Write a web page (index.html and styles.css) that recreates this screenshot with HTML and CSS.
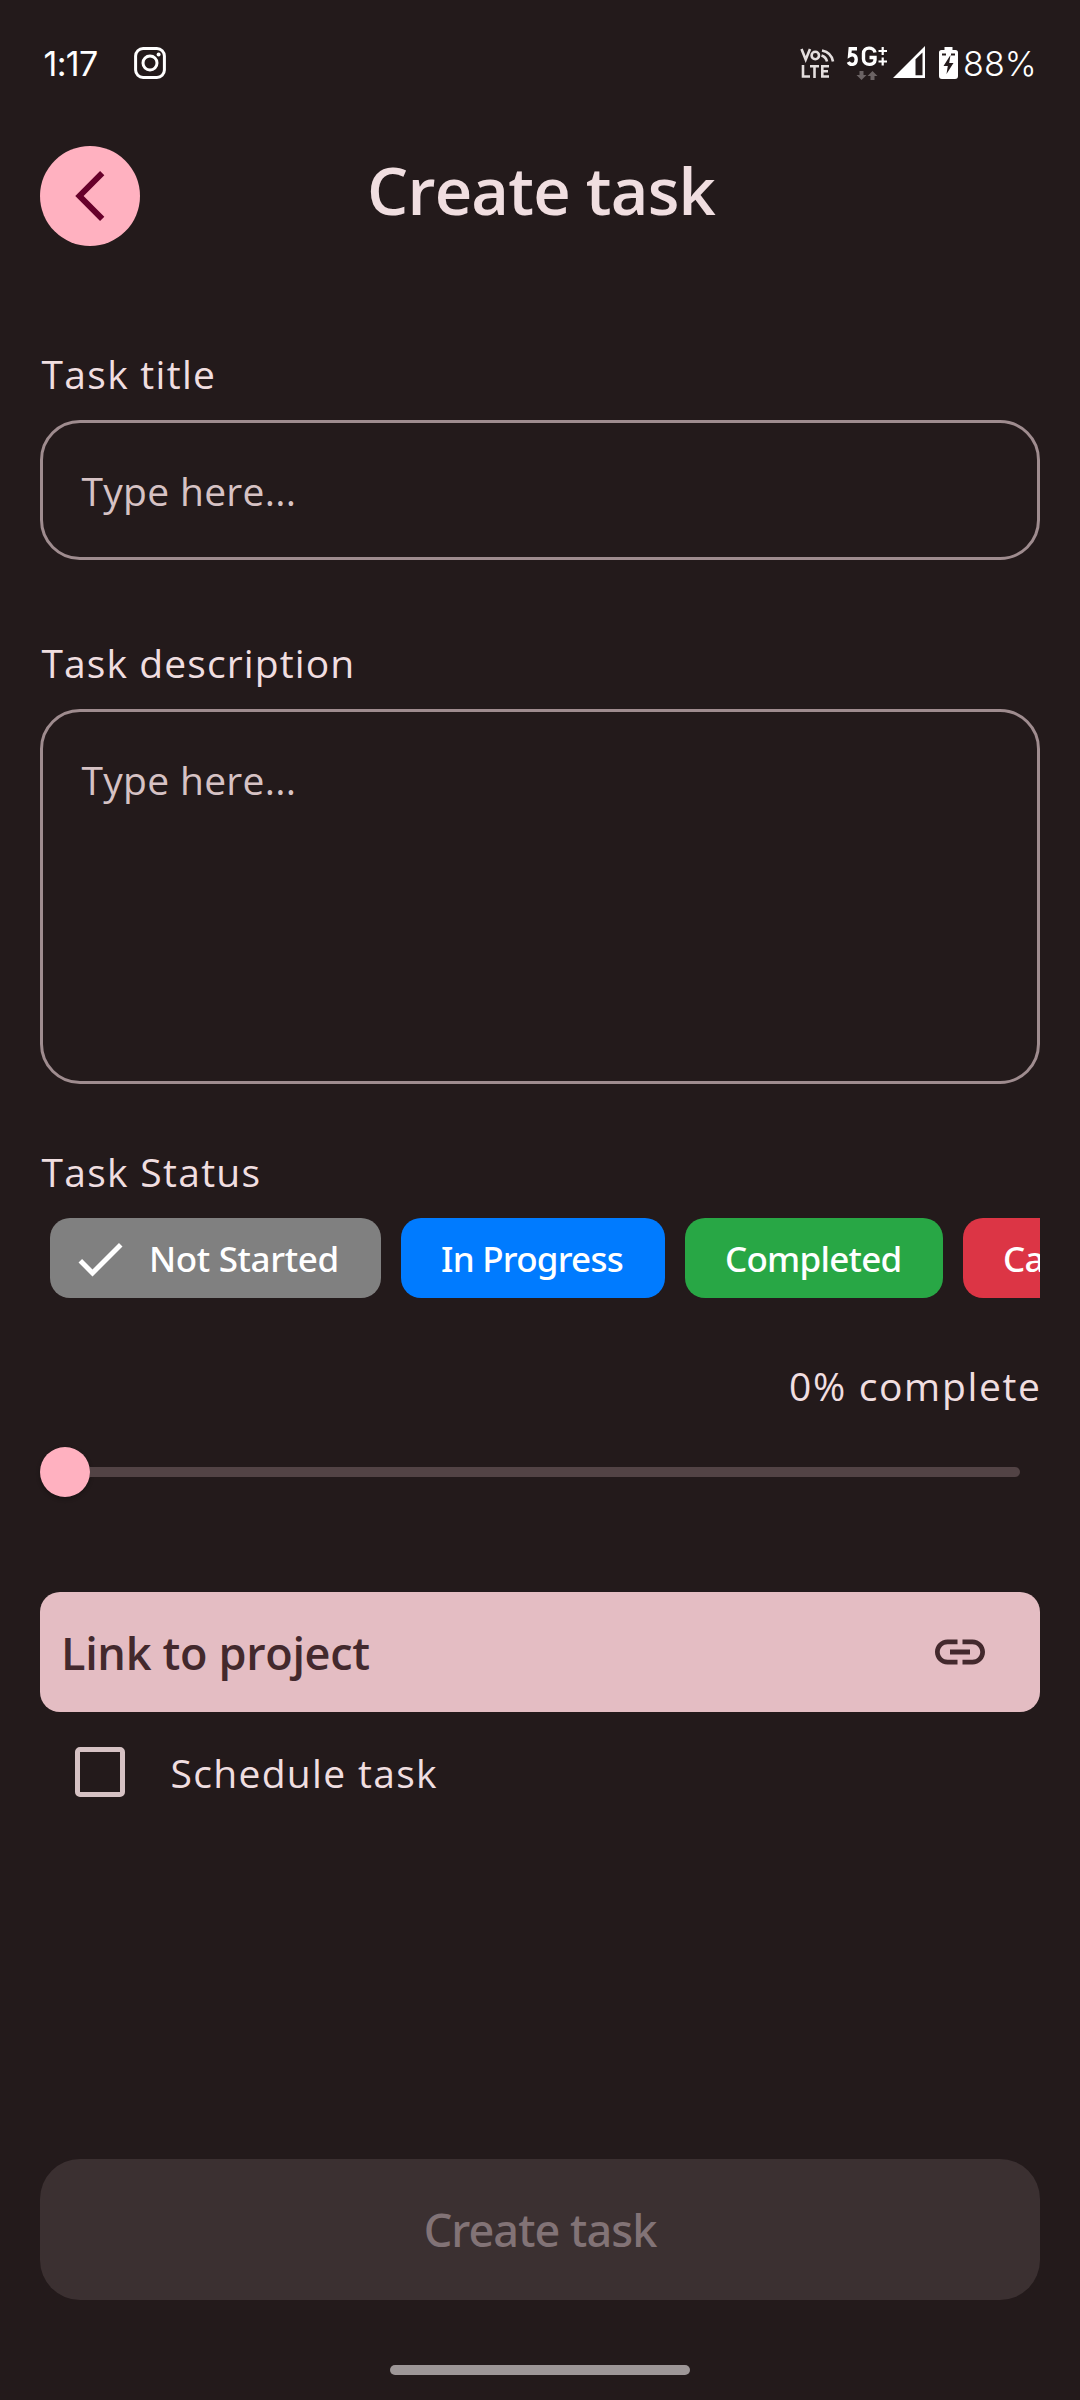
FILE: index.html
```html
<!DOCTYPE html>
<html lang="en">
<head>
<meta charset="utf-8">
<title>Create task</title>
<link rel="stylesheet" href="styles.css">
</head>
<body>
<div class="status-bar">
  <span class="clock">1:17</span>
  <svg class="insta" width="32" height="32" viewBox="0 0 32 32" fill="none" stroke="#fff">
    <rect x="1.6" y="1.6" width="28.8" height="28.8" rx="7.5" stroke-width="3"/>
    <circle cx="16" cy="16" r="7" stroke-width="3"/>
    <circle cx="24.6" cy="7.6" r="2" fill="#fff" stroke="none"/>
  </svg>
  <svg class="signals" width="160" height="40" viewBox="800 44 160 40">
    <g fill="none" stroke="#e4dede" stroke-width="2.6">
      <path d="M801.5 49L805.7 59.5L810 49"/>
      <circle cx="815.3" cy="55.5" r="3.7"/>
      <path d="M821.5 55.5Q826 57 827 61.5M822 50.5Q831.5 52.5 833 61.5"/>
      <path d="M803 65V76.5H810M810 66.3H819M814.5 66.3V78M829 66.3H822.3V76.5H829M822.3 71.3H828"/>
    </g>
    <g fill="none" stroke="#fff" stroke-width="3.4">
      <path d="M857 48.7H850.2L849.6 55.5C852 54 856.2 54.5 856.2 59.5C856.2 65.5 850 65.5 848.3 62"/>
      <path d="M875 52.5C874 46.5 863.5 46.5 863.5 53.5V59C863.5 66 875 66 875 60V57.5H869.5"/>
      <path d="M878.5 51H887M882.7 47V55M878.5 61.5H887M882.7 57.5V65.5" stroke-width="2.2"/>
    </g>
    <path d="M859.5 71h4v4h3l-5 5l-5-5h3zM870.500 80h4v-4h3l-5-5l-5 5h3z" fill="#6b6364"/>
    <path fill="#fff" fill-rule="evenodd" d="M893 78L925 46V78zM915.5 59.3V75.3H922.5V52.5z"/>
    <path fill="#fff" fill-rule="evenodd" d="M944.5 47h8v3h3q2.5 0 2.5 2.5v23.5q0 3-3 3h-13q-3 0-3-3v-23.5q0-2.5 2.5-2.5h3zM950.5 55l-7 11h4.3l-1.3 8l7-11h-4.300z"/>
    <path d="M942 54.5h4M951 54.5h4" stroke="#231a1b" stroke-width="2"/>
  </svg>
  <span class="battery">88%</span>
</div>

<header class="header">
  <div class="back">
    <svg width="100" height="100" viewBox="0 0 100 100" fill="none" stroke="#67002a" stroke-width="6"><path d="M62.2 27.2L39.5 50L62.2 72.8"/></svg>
  </div>
  <h1 class="title">Create task</h1>
</header>

<main class="form">
  <label class="label task-title">Task title</label>
  <div class="field">Type here...</div>
  <label class="label task-desc">Task description</label>
  <div class="field area">Type here...</div>
  <div class="label task-status">Task Status</div>
  <div class="chips">
    <div class="chip selected">
      <svg width="60" height="60" viewBox="0 0 24 24" fill="#fff"><path d="M9 16.17L4.83 12l-1.42 1.41L9 19 21 7l-1.41-1.41z"/></svg>
      <span class="not-started">Not Started</span>
    </div>
    <div class="chip progress">In Progress</div>
    <div class="chip done">Completed</div>
    <div class="chip cancelled">Cancelled</div>
  </div>
  <div class="label percent">0% complete</div>
  <div class="slider"><div class="thumb"></div><div class="track"></div></div>
  <div class="link">
    <span>Link to project</span>
    <svg width="60" height="60" viewBox="0 0 24 24" fill="#43292d"><path d="M3.9 12c0-1.71 1.39-3.1 3.1-3.1h4V7H7c-2.76 0-5 2.24-5 5s2.24 5 5 5h4v-1.9H7c-1.71 0-3.1-1.39-3.1-3.1zM8 13h8v-2H8v2zm9-6h-4v1.900h4c1.710 0 3.100 1.390 3.100 3.100s-1.390 3.100-3.100 3.100h-4V17h4c2.760 0 5-2.240 5-5s-2.240-5-5-5z"/></svg>
  </div>
  <div class="schedule">
    <div class="box"></div>
    <span class="label sched-label">Schedule task</span>
  </div>
</main>

<div class="submit">Create task</div>
<div class="nav-handle"></div>
</body>
</html>
```
FILE: styles.css
```css
* { box-sizing: border-box; }

body {
  margin: 0;
  width: 1080px;
  height: 2400px;
  overflow: hidden;
  background: #231a1b;
  color: #f0dee0;
  font-family: "Open Sans", "Noto Sans", sans-serif;
  display: flex;
  flex-direction: column;
}

.status-bar {
  height: 146px;
  padding: 43px 40px 0 43.5px;
  display: flex;
  align-items: flex-start;
  color: #fff;
  font: 400 34px/41px Inter, sans-serif;
}
.clock { width: 90.5px; letter-spacing: -0.65px; }
.insta { margin-top: 4px; }
.signals { margin: 1px 3px 0 634px; flex: none; }
.battery { font-weight: 300; letter-spacing: 0.1px; }

.header {
  height: 100px;
  margin: 0 40px;
  display: flex;
}
.back {
  width: 100px;
  height: 100px;
  border-radius: 50%;
  background: #ffb1c0;
}
.title {
  flex: 1;
  margin: 0 100px 0 2px;
  font-size: 65px;
  font-weight: 600;
  line-height: 88px;
  letter-spacing: -0.8px;
  text-align: center;
}

.form {
  margin: 103px 40px 0;
  display: flex;
  flex-direction: column;
}
.label {
  padding-left: 1.5px;
  font-size: 39px;
  line-height: 50px;
  white-space: nowrap;
}
.task-title { letter-spacing: 1.3px; }
.task-desc { margin-top: 78px; letter-spacing: 1.1px; }
.task-status { margin-top: 63px; letter-spacing: 1.29px; }

.field {
  height: 140px;
  margin-top: 21px;
  padding: 43px 38.5px;
  border: 3px solid #9f8c8f;
  border-radius: 40px;
  color: #d6c2c4;
  font-size: 39px;
  line-height: 50px;
  letter-spacing: 0.3px;
}
.area { height: 375px; }

.chips {
  margin-top: 21px;
  padding-left: 10px;
  display: flex;
  gap: 20px;
  overflow: hidden;
}
.chip {
  flex: none;
  height: 80px;
  border-radius: 20px;
  display: flex;
  align-items: center;
  padding: 1px 0 0 40px;
  color: #fff;
  font-family: "Noto Sans", "Open Sans", sans-serif;
  font-size: 35px;
  font-weight: 500;
  white-space: nowrap;
}
.selected { width: 331px; padding-left: 20px; gap: 19px; background: #808080; }
.not-started { letter-spacing: -0.35px; }
.progress { width: 264px; background: #007bff; letter-spacing: -0.75px; }
.done { width: 258px; background: #28a745; letter-spacing: -0.75px; }
.cancelled { width: 240px; background: #dc3545; letter-spacing: -0.75px; }

.percent {
  margin: 63px -1.6px 0 0;
  text-align: right;
  letter-spacing: 1.66px;
}

.slider {
  height: 50px;
  margin-top: 36px;
  display: flex;
  align-items: center;
}
.thumb {
  width: 50px;
  height: 50px;
  border-radius: 50%;
  background: #ffb1c0;
  box-shadow: 0 2px 4px rgba(0, 0, 0, 0.3);
}
.track {
  width: 930px;
  height: 10px;
  border-radius: 0 5px 5px 0;
  background: #524345;
}

.link {
  height: 120px;
  margin-top: 95px;
  padding: 0 50px 0 21px;
  border-radius: 20px;
  background: #e4bdc3;
  color: #43292d;
  display: flex;
  align-items: center;
  justify-content: space-between;
  font-size: 45px;
  font-weight: 600;
  letter-spacing: -0.32px;
}

.schedule {
  margin-top: 35px;
  padding-left: 35px;
  display: flex;
}
.box {
  width: 50px;
  height: 50px;
  border: 5px solid #d6c2c4;
  border-radius: 5px;
}
.sched-label { margin: 1px 0 0 44px; letter-spacing: 1.32px; }

.submit {
  height: 141px;
  margin: auto 40px 0;
  border-radius: 40px;
  background: #3b3031;
  color: #827376;
  font-family: "Noto Sans", "Open Sans", sans-serif;
  font-size: 45px;
  font-weight: 500;
  line-height: 142px;
  letter-spacing: -0.94px;
  text-align: center;
}
.nav-handle {
  width: 300px;
  height: 10px;
  margin: 65px auto 25px;
  border-radius: 5px;
  background: #9d9697;
  flex: none;
}
```
